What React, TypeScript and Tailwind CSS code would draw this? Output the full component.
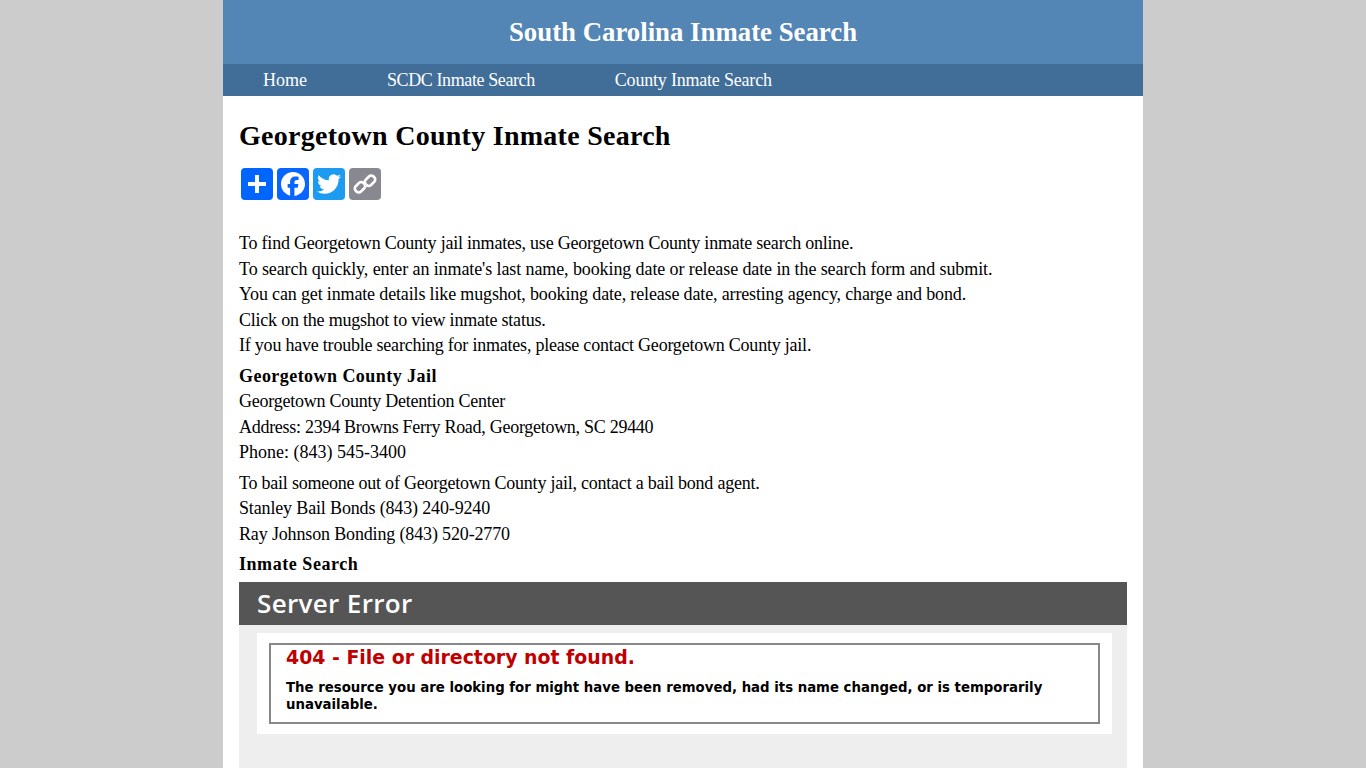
export default function App() {
  const serif = "font-['Liberation_Serif',serif]";
  const verdana = "font-['DejaVu_Sans',sans-serif]";

  return (
    <div className={`h-screen overflow-hidden bg-[#cccccc] ${serif}`}>
      <div className="mx-auto h-full w-[920px] bg-white">
        <header className="flex h-16 items-center justify-center bg-[#5385b5] text-[26.8px] font-bold text-white">
          South Carolina Inmate Search
        </header>
        <nav className="flex h-8 items-center bg-[#406e99] pl-10 text-[18px] text-white">
          <a className="mr-20">Home</a>
          <a className="mr-20 tracking-[-0.4px]">SCDC Inmate Search</a>
          <a className="tracking-[-0.2px]">County Inmate Search</a>
        </nav>

        <main className="px-4 text-[18px] leading-[25.5px] tracking-[-0.15px] text-black">
          <h1 className="mt-6 text-[28px] leading-8 font-bold tracking-[0.27px]">Georgetown County Inmate Search</h1>

          <div className="mt-4 flex gap-1 pl-0.5">
            <ShareIcon bg="bg-[#0166ff]">
              <path fill="#fff" d="M14 7h4v7h7v4h-7v7h-4v-7H7v-4h7z" />
            </ShareIcon>
            <ShareIcon bg="bg-[#0866ff]">
              <path
                fill="#fff"
                d="M28 16c0-6.627-5.373-12-12-12S4 9.373 4 16c0 5.628 3.875 10.35 9.101 11.647v-7.98h-2.474V16H13.1v-1.58c0-4.085 1.849-5.978 5.859-5.978.76 0 2.072.15 2.608.298v3.325c-.283-.03-.775-.045-1.386-.045-1.967 0-2.728.745-2.728 2.683V16h3.92l-.673 3.667h-3.247v8.245C23.395 27.195 28 22.135 28 16"
              />
            </ShareIcon>
            <ShareIcon bg="bg-[#1d9bf0]">
              <path
                fill="#fff"
                d="M28 8.557a10 10 0 0 1-2.828.775 4.93 4.93 0 0 0 2.166-2.725 9.7 9.7 0 0 1-3.13 1.194 4.92 4.92 0 0 0-3.593-1.55 4.924 4.924 0 0 0-4.794 6.049c-4.09-.21-7.72-2.17-10.15-5.15a4.94 4.94 0 0 0-.665 2.477c0 1.71.87 3.214 2.19 4.1a5 5 0 0 1-2.23-.616v.06c0 2.39 1.7 4.38 3.952 4.83-.414.115-.85.174-1.297.174q-.476-.001-.928-.086a4.935 4.935 0 0 0 4.6 3.42 9.9 9.9 0 0 1-6.114 2.107q-.597 0-1.175-.068a13.95 13.95 0 0 0 7.55 2.213c9.056 0 14.01-7.507 14.01-14.013q0-.32-.015-.637c.96-.695 1.795-1.56 2.455-2.55z"
              />
            </ShareIcon>
            <ShareIcon bg="bg-[#888990]">
              <g fill="none" stroke="#fff" strokeWidth="2.6">
                <rect x="5.5" y="15.5" width="11" height="7.5" rx="3.2" transform="rotate(-45 11 19.25)" />
                <rect x="15.5" y="9" width="11" height="7.5" rx="3.2" transform="rotate(-45 21 12.75)" />
              </g>
            </ShareIcon>
          </div>

          <div className="mt-[31px]">
            <p className="tracking-[-0.22px]">To find Georgetown County jail inmates, use Georgetown County inmate search online.</p>
            <p className="tracking-[-0.1px]">To search quickly, enter an inmate's last name, booking date or release date in the search form and submit.</p>
            <p>You can get inmate details like mugshot, booking date, release date, arresting agency, charge and bond.</p>
            <p className="tracking-[-0.22px]">Click on the mugshot to view inmate status.</p>
            <p className="tracking-[-0.22px]">If you have trouble searching for inmates, please contact Georgetown County jail.</p>
          </div>

          <div className="mt-[5px]">
            <p className="font-bold tracking-[0.45px]">Georgetown County Jail</p>
            <p className="tracking-[-0.24px]">Georgetown County Detention Center</p>
            <p className="tracking-[-0.28px]">Address: 2394 Browns Ferry Road, Georgetown, SC 29440</p>
            <p className="tracking-normal">Phone: (843) 545-3400</p>
          </div>

          <div className="mt-[5px]">
            <p className="tracking-[-0.23px]">To bail someone out of Georgetown County jail, contact a bail bond agent.</p>
            <p>Stanley Bail Bonds (843) 240-9240</p>
            <p>Ray Johnson Bonding (843) 520-2770</p>
          </div>

          <p className="mt-[5px] font-bold tracking-[0.55px]">Inmate Search</p>

          <section className="mt-1 h-[300px] bg-[#eeeeee] tracking-normal">
            <div className="flex h-[43px] items-center bg-[#555555] pt-0.5 pl-[18px] font-['Open_Sans',sans-serif] text-[26px] font-semibold tracking-[0.35px] text-white">
              Server Error
            </div>
            <div className={`mx-[18px] mt-2 w-[855px] bg-white px-3 py-2.5 ${verdana}`}>
              <div className="h-[81px] border-2 border-[#888888] pl-[15px]">
                <h2 className="mt-px text-[18.9px] leading-[22px] font-bold text-[#c00000]">404 - File or directory not found.</h2>
                <p className="mt-[11px] text-[13.3px] leading-[17px] font-bold">
                  The resource you are looking for might have been removed, had its name changed, or is temporarily unavailable.
                </p>
              </div>
            </div>
          </section>
        </main>
      </div>
    </div>
  );
}

function ShareIcon({ bg, children }: { bg: string; children: React.ReactNode }) {
  return (
    <span className={`block h-8 w-8 rounded ${bg}`}>
      <svg viewBox="0 0 32 32" className="h-8 w-8">
        {children}
      </svg>
    </span>
  );
}
